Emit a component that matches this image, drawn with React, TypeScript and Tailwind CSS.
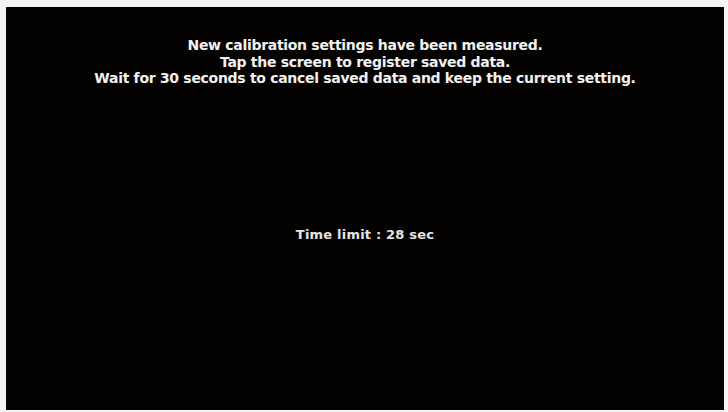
export default function App() {
  return (
    <div className="w-[728px] h-[412px] bg-[#f4f4f2] pl-[6px] pr-[4px] pt-[7px] pb-[2px] overflow-hidden">
      <div
        className="h-full w-full bg-[#050302] flex flex-col items-center text-[#f2f2f2]"
        style={{ fontFamily: '"DejaVu Sans", Verdana, sans-serif' }}
      >
        <div className="mt-[30px] text-center text-[14px] font-bold leading-[16.5px] tracking-[-0.3px]">
          <p>New calibration settings have been measured.</p>
          <p>Tap the screen to register saved data.</p>
          <p>Wait for 30 seconds to cancel saved data and keep the current setting.</p>
        </div>
        <p className="mt-[140px] text-[13px] font-bold leading-[16px] text-[#e4e4e4] tracking-[0.2px]">
          Time limit : 28 sec
        </p>
      </div>
    </div>
  );
}
